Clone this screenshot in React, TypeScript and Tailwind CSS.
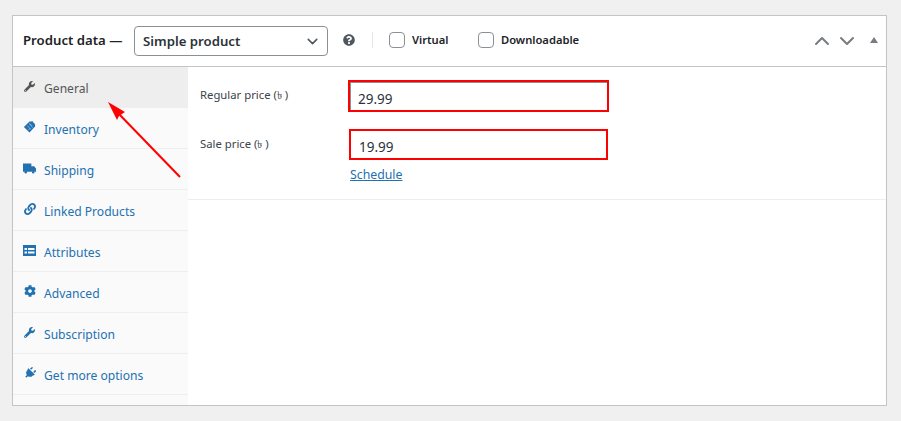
import { FaWrench, FaLink, FaCog, FaPlug, FaQuestionCircle } from "react-icons/fa";
import { ChevronDown, ChevronUp } from "lucide-react";
import type { ReactNode } from "react";

function TagIcon() {
    return (
        <svg width="14" height="14" viewBox="0 0 14 14" fill="currentColor">
            <path d="M7 1 L9 1 L10 0.5 L11 2 L13 4 L13 6.5 L7 13 L1 7 Z" />
            <path d="M4.5 5.5 L8.5 9.5 M6.5 3.5 L10.5 7.5 M8 8 L5.5 10.5 M10 6 L7 3" stroke="#9cc3e4" strokeWidth="0.8" />
        </svg>
    );
}

function TruckIcon() {
    return (
        <svg width="14" height="11" viewBox="0 0 14 11" fill="currentColor">
            <path d="M0 0 H9 V3 H12 L14 5.5 V9 H0 Z" />
            <circle cx="3" cy="9.5" r="1.3" />
            <circle cx="11" cy="9.5" r="1.3" />
        </svg>
    );
}

function AttrIcon() {
    return (
        <svg width="13" height="11" viewBox="0 0 13 11" fill="currentColor">
            <path fillRule="evenodd" d="M0 0 H13 V11 H0 Z M1.5 3 V5 H4 V3 Z M5 3 V5 H11.5 V3 Z M1.5 6.5 V8.5 H4 V6.5 Z M5 6.5 V8.5 H11.5 V6.5 Z" />
        </svg>
    );
}

const tabs: { label: string; icon: ReactNode }[] = [
    { label: "Inventory", icon: <TagIcon /> },
    { label: "Shipping", icon: <TruckIcon /> },
    { label: "Linked Products", icon: <FaLink size={12} /> },
    { label: "Attributes", icon: <AttrIcon /> },
    { label: "Advanced", icon: <FaCog size={12} /> },
    { label: "Subscription", icon: <FaWrench size={11} /> },
    { label: "Get more options", icon: <FaPlug size={12} className="rotate-45" /> },
];

export default function App() {
    return (
        <div className="relative w-[901px] h-[421px] overflow-hidden bg-[#f0f0f0] pt-[15px] pl-3 font-['Noto_Sans',sans-serif] text-[12.1px] text-[#3c434a]">
            <div className="w-[875px] h-[391px] flex flex-col border border-[#c3c4c7] bg-white">
                {/* header */}
                <div className="h-[51px] flex items-center border-b border-[#c3c4c7] pl-[10px] pr-2 shrink-0">
                    <span className="text-[13.2px] font-semibold text-[#1d2327] w-[111px] -mt-[1px]">Product data —</span>
                    <div className="w-[194px] h-[30px] flex items-center justify-between border border-[#8c8f94] rounded-[4px] pl-2 pr-[6px]">
                        <span className="text-[13.2px] font-semibold text-[#2c3338] mt-[2px]">Simple product</span>
                        <ChevronDown size={17} strokeWidth={2.2} className="text-[#50575e]" />
                    </div>
                    <FaQuestionCircle size={12} className="ml-[15px] -mt-[2px] text-[#50575e]" />
                    <div className="w-px h-4 bg-[#e4e4e4] ml-[17px] -mt-[2px]" />
                    <div className="w-4 h-4 ml-4 border border-[#8c8f94] rounded-[4px] bg-white -mt-[2px]" />
                    <span className="ml-[7px] text-[11.2px] font-semibold text-[#1d2327] -mt-[2px] w-[66px]">Virtual</span>
                    <div className="w-4 h-4 border border-[#8c8f94] rounded-[4px] bg-white -mt-[2px]" />
                    <span className="ml-[7px] text-[11.2px] font-semibold text-[#1d2327] -mt-[2px]">Downloadable</span>
                    <div className="ml-auto flex items-center text-[#787c82]">
                        <ChevronUp size={24} strokeWidth={2} />
                        <ChevronDown size={24} strokeWidth={2} className="ml-[1.5px]" />
                        <div className="ml-[11px] w-0 h-0 -mt-[3px] border-x-4 border-x-transparent border-b-[6px] border-b-[#787c82]" />
                    </div>
                </div>

                <div className="flex flex-1 min-h-0">
                    {/* sidebar */}
                    <div className="w-[175px] bg-[#fafafa] shrink-0">
                        <div className="h-[41px] flex items-center bg-[#eeeeee] border-b border-[#eeeeee] pl-[10px] text-[#555]">
                            <span className="w-[13px] mr-2 flex justify-center -mt-[2px]"><FaWrench size={11} /></span>
                            <span className="mt-[5px]">General</span>
                        </div>
                        {tabs.map((t) => (
                            <div key={t.label} className="h-[41px] flex items-center border-b border-[#eeeeee] pl-[10px] text-[#2271b1]">
                                <span className="w-[13px] mr-2 flex justify-center -mt-[2px]">{t.icon}</span>
                                <span className="mt-[5px]">{t.label}</span>
                            </div>
                        ))}
                    </div>

                    {/* general panel */}
                    <div className="flex-1">
                        <div className="h-[133px] border-b border-[#eeeeee] pl-3 pt-[13px] text-[11.3px]">
                            <div className="flex">
                                <span className="w-[148px] mt-[7px]">Regular price (৳ )</span>
                                <div className="w-[261px] h-[32px] border-2 border-[#ff0000]">
                                    <div className="h-full border border-[#8c8f94] border-b-0 border-r-0 pl-[7px] text-[13.5px] leading-[32px] text-[#2c3338]">29.99</div>
                                </div>
                            </div>
                            <div className="flex mt-[17px]">
                                <span className="w-[149px] mt-[7px]">Sale price (৳ )</span>
                                <div className="w-[259px] h-[31px] border-2 border-[#ff0000] pl-2 text-[13.5px] leading-[33px] text-[#2c3338]">19.99</div>
                            </div>
                            <a href="#" className="block ml-[150px] mt-[6px] text-[12.3px] text-[#2271b1] underline">Schedule</a>
                        </div>
                    </div>
                </div>
            </div>

            {/* red annotation arrow */}
            <svg className="absolute left-[100px] top-[95px]" width="90" height="90" viewBox="0 0 90 90" fill="none">
                <path d="M80 82 L18 18" stroke="#ff0000" strokeWidth="2" />
                <path d="M8 7 L25 17 L19 21 L17 25 Z" fill="#ff0000" />
            </svg>
        </div>
    );
}
